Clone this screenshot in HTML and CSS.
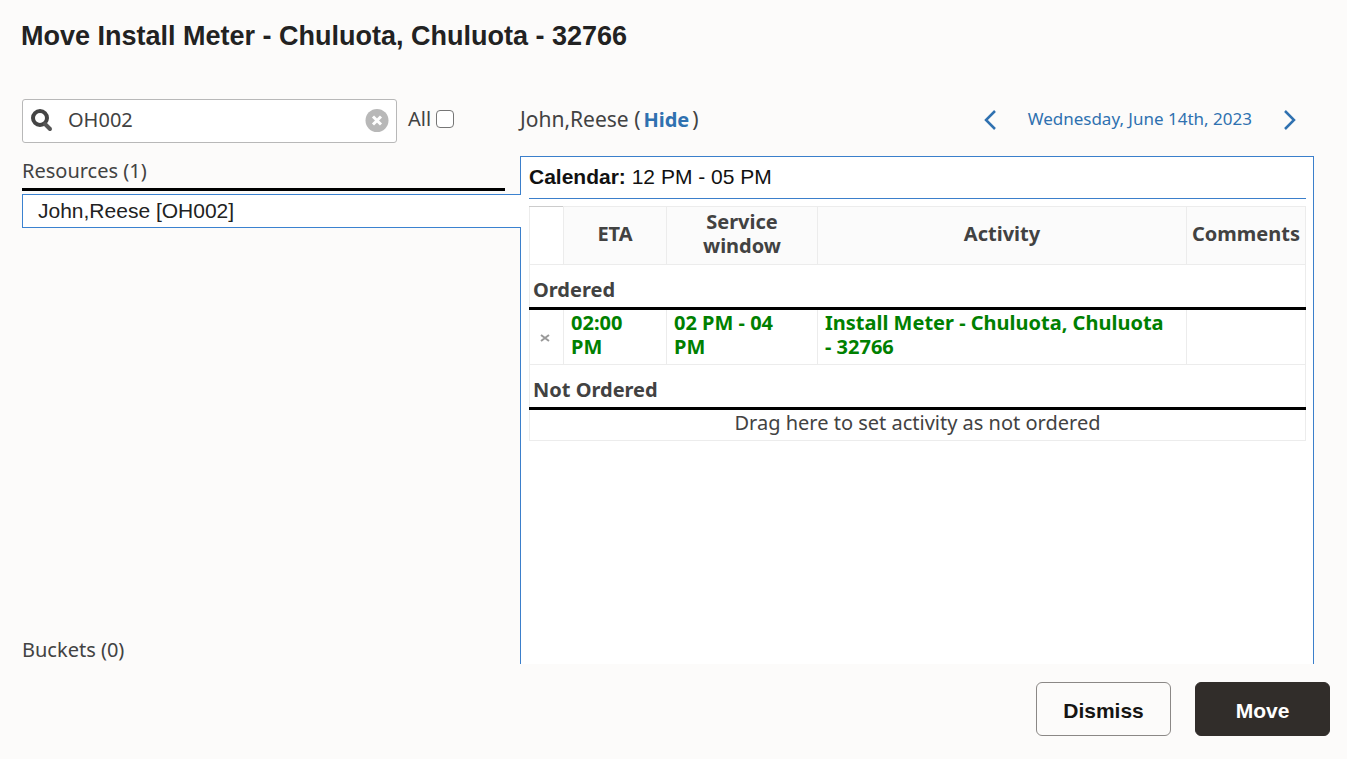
FILE: index.html
```html
<!DOCTYPE html>
<html lang="en">
<head>
  <meta charset="UTF-8"/>
  <meta name="viewport" content="width=device-width, initial-scale=1.0"/>
  <title>Move Install Meter</title>
  <link rel="stylesheet" href="styles.css">
</head>
<body>

<header><h1>Move Install Meter - Chuluota, Chuluota - 32766</h1></header>

<main class="content">
  <section class="left">
    <div class="search-row">
      <div class="search-box">
        <svg class="search-icon" viewBox="0 0 24 24" width="24" height="24">
          <circle cx="10" cy="9" r="7" fill="none" stroke="#444" stroke-width="4"/>
          <path d="M15 15l5 5" stroke="#555" stroke-width="4" stroke-linecap="round"/>
        </svg>
        <input id="search" type="text" value="OH002" aria-label="Search resources"/>
        <button class="clear-btn" type="button" aria-label="Clear">
          <svg viewBox="0 0 24 24" width="24" height="24">
            <circle cx="12" cy="11.5" r="11.5" fill="#b8b8b8"/>
            <path d="M8 7.500l8 8M16 7.500l-8 8" stroke="#fff" stroke-width="3"/>
          </svg>
        </button>
      </div>
      <div class="all">
        <label for="all">All</label>
        <input id="all" type="checkbox"/>
      </div>
    </div>
    <h2 class="group-title">Resources (1)</h2>
    <a class="resource" href="#">John,Reese [OH002]</a>
    <h2 class="buckets">Buckets (0)</h2>
  </section>

  <section class="right">
    <div class="toolbar">
      <div class="who">John,Reese (<a class="hide-link" href="#">Hide</a>)</div>
      <div class="date-nav">
        <button type="button" aria-label="Previous day">
          <svg viewBox="0 0 14 22" width="14" height="22"><path d="M12 3l-9 9 9 9" fill="none" stroke="#2f71b0" stroke-width="2.500"/></svg>
        </button>
        <a href="#">Wednesday, June 14th, 2023</a>
        <button type="button" aria-label="Next day">
          <svg viewBox="0 0 14 22" width="14" height="22"><path d="M2 3l9 9-9 9" fill="none" stroke="#2f71b0" stroke-width="2.500"/></svg>
        </button>
      </div>
    </div>
    <div class="panel">
      <p class="calendar"><b>Calendar:</b> 12 PM - 05 PM</p>
      <table>
        <colgroup>
          <col class="col-x"/><col class="col-eta"/><col class="col-window"/><col/><col class="col-comments"/>
        </colgroup>
        <thead>
          <tr><td class="corner"></td><th>ETA</th><th>Service window</th><th>Activity</th><th>Comments</th></tr>
        </thead>
        <tbody>
          <tr class="group"><th colspan="5">Ordered</th></tr>
          <tr class="activity">
            <td class="remove">
              <button type="button" aria-label="Remove">
                <svg viewBox="0 0 10 8" width="10" height="8"><path d="M1 1l8 6M9 1L1 7" stroke="#999" stroke-width="2"/></svg>
              </button>
            </td>
            <td>02:00 PM</td>
            <td>02 PM - 04 PM</td>
            <td>Install Meter - Chuluota, Chuluota - 32766</td>
            <td></td>
          </tr>
          <tr class="group"><th colspan="5">Not Ordered</th></tr>
          <tr class="drop"><td colspan="5">Drag here to set activity as not ordered</td></tr>
        </tbody>
      </table>
    </div>
  </section>
</main>

<footer>
  <button class="btn" type="button">Dismiss</button>
  <button class="btn btn-primary" type="button">Move</button>
</footer>

</body>
</html>
```

FILE: styles.css
```css
*,*::before,*::after{box-sizing:border-box;margin:0;padding:0;}
body{display:flex;flex-direction:column;min-height:100vh;background:#fcfbfa;color:#424242;font:20px/24px "Noto Sans",sans-serif;}
button{border:none;background:none;cursor:pointer;}
svg{display:block;}
a{color:#2f71b0;text-decoration:none;}

header{height:98px;padding:20px 21px;}
h1{font:bold 27px/32px "Liberation Sans",Arial,sans-serif;color:#222;}
h2{font-size:20px;font-weight:normal;line-height:24px;}

.content{flex:1;display:grid;grid-template-columns:minmax(0,498fr) minmax(0,794fr);padding:0 33px 0 22px;}
.left{display:flex;flex-direction:column;}

.search-row{display:flex;align-items:center;margin-top:1px;}
.search-box{display:flex;align-items:center;width:375px;height:44px;padding:0 7px;background:#fff;border:1px solid #b8b8b8;border-radius:3px;}
.search-box input{flex:1;min-width:0;margin-left:14px;padding-bottom:2px;border:none;outline:none;background:none;color:#424242;font:inherit;}
.all{display:flex;align-items:center;gap:5px;padding:0 0 4px 11px;}
#all{width:18px;height:18px;appearance:none;background:#fff;border:1px solid #767676;border-radius:4px;}
#all:checked{background:#2f71b0;}

.group-title{margin:12px 15px 3px 0;padding:4px 0 5px;border-bottom:3px solid #000;}
.resource{position:relative;z-index:1;margin-right:-1px;padding:4px 15px;background:#fff;border:1px solid #3b82d0;border-right:none;color:#222;font:21px/24px "Liberation Sans",Arial,sans-serif;}
.buckets{margin-top:auto;margin-bottom:2px;}

.right{display:flex;flex-direction:column;}
.toolbar{display:flex;justify-content:space-between;align-items:center;height:42px;margin-bottom:16px;}
.who{font-size:21px;}
.hide-link{margin:0 3px;font-weight:bold;font-size:20px;}
.date-nav{display:flex;align-items:center;gap:31px;margin-right:17px;font-size:17px;}
.panel{flex:1;padding:8px 7px 0 8px;background:#fff;border:1px solid #3b7fcb;border-bottom:none;}
.calendar{height:34px;margin-bottom:7px;border-bottom:1px solid #3b7fcb;color:#111;font:21px/24px "Liberation Sans",Arial,sans-serif;}

table{width:100%;table-layout:fixed;border-collapse:collapse;}
.col-x{width:34px;}
.col-eta{width:103px;}
.col-window{width:151px;}
.col-comments{width:119px;}
th,td{border:1px solid #ececec;}
thead tr{height:58px;}
thead th{padding-bottom:4px;background:#fbfbfb;}
thead th:nth-child(3){padding:0 20px 4px;}
thead .corner{border-top-color:#ccc;}
.group th{height:44px;padding:8px 3px 0;text-align:left;border-bottom:3px solid #000;}
.activity{height:56px;vertical-align:top;color:#008000;font-weight:bold;}
.activity td{padding:1px 20px 5px 7px;}
.activity .remove{padding:0 0 4px 10px;vertical-align:middle;}
.drop td{height:32px;padding-bottom:4px;text-align:center;}

footer{display:flex;justify-content:flex-end;gap:24px;padding:18px 17px 23px;}
.btn{width:135px;height:54px;padding-top:3px;border:1px solid #8b8886;border-radius:6px;color:#161513;font:bold 21px/24px "Liberation Sans",Arial,sans-serif;}
.btn-primary{background:#312d2a;border-color:#312d2a;color:#fff;}
```
